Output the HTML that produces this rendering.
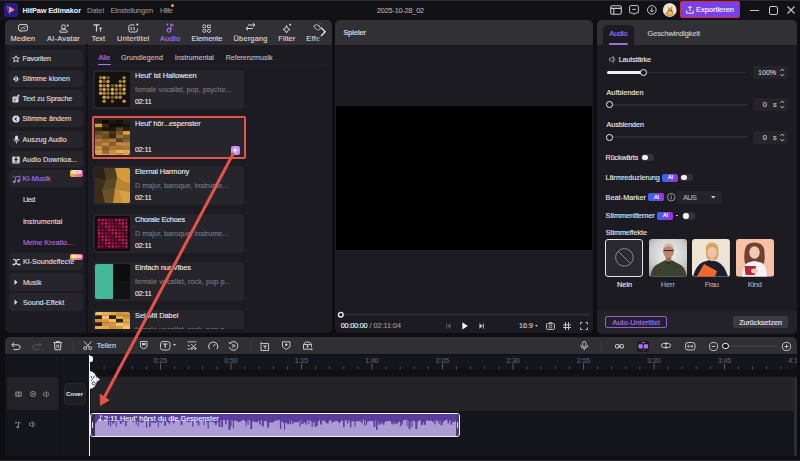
<!DOCTYPE html>
<html><head><meta charset="utf-8">
<style>
*{margin:0;padding:0;box-sizing:border-box}
html,body{width:800px;height:461px;overflow:hidden;background:#0e0d12;font-family:"Liberation Sans",sans-serif;color:#e6e6ea}
.a{position:absolute}
.t{position:absolute;white-space:nowrap;line-height:1;-webkit-text-stroke:0.15px currentColor}
.t.b{-webkit-text-stroke:0}
svg{position:absolute;overflow:visible}
</style></head><body>
<div class="a" style="left:0px;top:0px;width:800px;height:20px;background:#121116;"></div>
<div class="a" style="left:0px;top:0px;width:800px;height:1px;background:#2a292f;"></div>
<div class="a" style="left:4.3px;top:3px;width:13.5px;height:13.7px;background:#2a1b7e;border-radius:3px"></div>
<svg style="left:4px;top:3px" width="14" height="14" viewBox="0 0 14 14"><defs><linearGradient id="lg1" x1="0" y1="0" x2="1" y2="0"><stop offset="0" stop-color="#ffb070"/><stop offset="1" stop-color="#d040e0"/></linearGradient></defs>
<path d="M5.2 3.6 L11.2 6.8 L5.2 10 Z" fill="url(#lg1)"/>
<circle cx="3.9" cy="3.9" r="0.8" fill="#9a7af0"/><circle cx="3.9" cy="6.3" r="0.8" fill="#8a6ae0"/><circle cx="4.4" cy="8.7" r="0.8" fill="#7a5ad0"/><circle cx="5.4" cy="10.8" r="0.7" fill="#6a4ac0"/></svg>
<div class="t b" style="left:22.50px;top:6.63px;font-size:7.4px;letter-spacing:-0.130px;color:#f4f4f6;font-weight:bold;">HitPaw Edimakor</div>
<div class="t" style="left:87.00px;top:6.63px;font-size:7.4px;letter-spacing:-0.055px;color:#8e8d93;">Datei</div>
<div class="t" style="left:110.60px;top:6.63px;font-size:7.4px;letter-spacing:-0.156px;color:#8e8d93;">Einstellungen</div>
<div class="t" style="left:160.00px;top:6.63px;font-size:7.4px;letter-spacing:-0.461px;color:#8e8d93;">Hilfe</div>
<div class="a" style="left:170.6px;top:3.9px;width:3.3px;height:3.3px;background:#f0a030;border-radius:50%"></div>
<div class="t" style="left:377.00px;top:7.03px;font-size:7.2px;letter-spacing:-0.141px;color:#a9a8ae;">2025-10-28_02</div>
<svg style="left:610px;top:5px" width="12" height="10" viewBox="0 0 12 10"><rect x="0.7" y="0.7" width="10.6" height="8.6" rx="1.8" fill="none" stroke="#c9c9cd" stroke-width="1.1"/><path d="M0.7 3.4H11.3M3.8 3.4V9.3" stroke="#c9c9cd" stroke-width="1.1"/></svg>
<svg style="left:629px;top:5px" width="10" height="11" viewBox="0 0 10 11"><path d="M1.5 0.6H8.5A1 1 0 0 1 9.4 1.6V7A1 1 0 0 1 8.5 8H6.2L5 9.6L3.8 8H1.5A1 1 0 0 1 0.6 7V1.6A1 1 0 0 1 1.5 0.6Z" fill="none" stroke="#c9c9cd" stroke-width="1"/><path d="M3.3 4.4H6.7" stroke="#c9c9cd" stroke-width="1"/></svg>
<svg style="left:647px;top:5px" width="10" height="10" viewBox="0 0 10 10"><circle cx="4.8" cy="4.9" r="4.3" fill="none" stroke="#c9c9cd" stroke-width="1"/><path d="M4.8 2.6V7M3.1 5.3L4.8 7L6.5 5.3" fill="none" stroke="#c9c9cd" stroke-width="1"/></svg>
<svg style="left:663px;top:3px" width="14" height="14" viewBox="0 0 14 14"><defs><clipPath id="avc"><circle cx="6.7" cy="7" r="6.7"/></clipPath></defs><g clip-path="url(#avc)"><rect width="14" height="14" fill="#eee2cc"/><path d="M3 13Q3.5 8 5.5 6.5L4.5 3.5L7 5.2L9.5 3L9 6.5Q11 8.5 11 13Z" fill="#c8944e"/><path d="M5 9Q7 7.5 9 9.5L8 12H5.5Z" fill="#e6b870"/><circle cx="6" cy="7.6" r="0.6" fill="#4a3020"/><circle cx="8.4" cy="7.6" r="0.6" fill="#4a3020"/><path d="M1 12L4 9" stroke="#a87040" stroke-width="0.8"/></g><circle cx="6.7" cy="7" r="6.5" fill="none" stroke="#f4ece0" stroke-width="0.5"/></svg>
<div class="a" style="left:679.5px;top:1.2px;width:60.5px;height:17px;background:#7a40e8;border:1px solid #d8283c;border-radius:2px"></div>
<svg style="left:686px;top:4.5px" width="8" height="9" viewBox="0 0 8 9"><path d="M4 6V1.2M2.1 3L4 1.1L5.9 3M0.7 5.5V8.2H7.3V5.5" fill="none" stroke="#f2ecff" stroke-width="1"/></svg>
<div class="t" style="left:696.00px;top:6.38px;font-size:7.5px;letter-spacing:-0.032px;color:#f7f3ff;">Exportieren</div>
<div class="a" style="left:750px;top:9.5px;width:9px;height:1.2px;background:#c9c9cd;"></div>
<div class="a" style="left:769px;top:6px;width:8.5px;height:8.5px;background:transparent;border:1.1px solid #c9c9cd;border-radius:2px"></div>
<svg style="left:787px;top:6px" width="8" height="8" viewBox="0 0 8 8"><path d="M0.5 0.5L7.5 7.5M7.5 0.5L0.5 7.5" stroke="#c9c9cd" stroke-width="1.1"/></svg>
<div class="a" style="left:5px;top:20px;width:327px;height:313px;background:#1c1b21;border-radius:5px;overflow:hidden"></div>
<div class="a" style="left:5px;top:20px;width:327px;height:24.6px;background:#313135;border-radius:5px 5px 0 0"></div>
<div class="a" style="left:86.3px;top:44px;width:1.4px;height:289px;background:#131217;"></div>
<svg style="left:17.5px;top:24px" width="10" height="8" viewBox="0 0 10 8"><path d="M2 0.6H8A1.4 1.4 0 0 1 9.4 2V5.4A1.4 1.4 0 0 1 8 6.8H4.5L3 7.6V6.8H2A1.4 1.4 0 0 1 0.6 5.4V2A1.4 1.4 0 0 1 2 0.6Z" fill="none" stroke="#d6d6da" stroke-width="1"/><path d="M2.5 5.5L5 3.3L7 5" fill="none" stroke="#d6d6da" stroke-width="0.9"/><circle cx="7.2" cy="2.6" r="0.7" fill="#d6d6da"/></svg>
<div class="t" style="left:10.50px;top:35.13px;font-size:7.4px;letter-spacing:0.072px;color:#d6d6da;">Medien</div>
<svg style="left:58.5px;top:23.5px" width="11" height="9" viewBox="0 0 11 9"><circle cx="4.5" cy="2.8" r="2" fill="none" stroke="#d6d6da" stroke-width="1"/><path d="M1 8.2V7.4C1 6.3 2 5.6 3.2 5.6H6C7.2 5.6 8.2 6.3 8.2 7.4V8.2Z" fill="none" stroke="#d6d6da" stroke-width="1"/><circle cx="8.8" cy="1.4" r="1" fill="#d6d6da"/></svg>
<div class="t" style="left:47.00px;top:35.13px;font-size:7.4px;letter-spacing:0.255px;color:#d6d6da;">AI-Avatar</div>
<svg style="left:92.5px;top:24px" width="10" height="8" viewBox="0 0 10 8"><path d="M0.5 0.8H6.5M3.5 0.8V7.6" stroke="#d6d6da" stroke-width="1.2"/><path d="M6 4.2H9.2M7.6 4.2V7.6" stroke="#d6d6da" stroke-width="1"/></svg>
<div class="t" style="left:91.50px;top:35.13px;font-size:7.4px;letter-spacing:-0.018px;color:#d6d6da;">Text</div>
<svg style="left:127.5px;top:22.5px" width="11" height="10" viewBox="0 0 11 10"><path d="M6.5 2H2.4A1.6 1.6 0 0 0 0.8 3.6V7.4A1.6 1.6 0 0 0 2.4 9H7.8A1.6 1.6 0 0 0 9.4 7.4V5.5" fill="none" stroke="#d6d6da" stroke-width="1"/><path d="M4.2 4.6H3V6.6H4.2M7 4.6H5.8V6.6H7" fill="none" stroke="#d6d6da" stroke-width="0.8"/><circle cx="9.3" cy="1.5" r="1.1" fill="#d6d6da"/></svg>
<div class="t" style="left:117.00px;top:35.13px;font-size:7.4px;letter-spacing:0.289px;color:#d6d6da;">Untertitel</div>
<svg style="left:165.5px;top:23px" width="9" height="10" viewBox="0 0 9 10"><circle cx="3" cy="7.3" r="1.9" fill="none" stroke="#b06ef0" stroke-width="1.1"/><path d="M4.9 7.3V1Q6.5 1.5 7.8 3" fill="none" stroke="#b06ef0" stroke-width="1.1"/><circle cx="1.3" cy="1.5" r="0.9" fill="#b06ef0"/></svg>
<div class="t" style="left:160.00px;top:35.13px;font-size:7.4px;letter-spacing:0.295px;color:#b06ef0;">Audio</div>
<svg style="left:201.5px;top:23.5px" width="10" height="9" viewBox="0 0 10 9"><circle cx="2.3" cy="2.3" r="1.6" fill="none" stroke="#d6d6da" stroke-width="0.9"/><circle cx="2.3" cy="6.8" r="1.6" fill="none" stroke="#d6d6da" stroke-width="0.9"/><circle cx="7" cy="6.8" r="1.6" fill="none" stroke="#d6d6da" stroke-width="0.9"/><rect x="5.6" y="1" width="2.6" height="2.6" fill="none" stroke="#d6d6da" stroke-width="0.8"/></svg>
<div class="t" style="left:191.60px;top:35.13px;font-size:7.4px;letter-spacing:-0.058px;color:#d6d6da;">Elemente</div>
<svg style="left:245px;top:23px" width="11" height="9" viewBox="0 0 11 9"><path d="M3 2H10M8 0.2L10 2L8 3.8" fill="none" stroke="#d6d6da" stroke-width="1"/><path d="M1 5.5H8M3 3.7L1 5.5L3 7.3" fill="none" stroke="#d6d6da" stroke-width="1"/></svg>
<div class="t" style="left:233.60px;top:35.13px;font-size:7.4px;letter-spacing:0.188px;color:#d6d6da;">Übergang</div>
<svg style="left:282px;top:22.5px" width="10" height="10" viewBox="0 0 10 10"><path d="M4.5 2.5Q5 6 8 6.5Q5 7 4.5 10Q4 7 1 6.5Q4 6 4.5 2.5Z" fill="none" stroke="#d6d6da" stroke-width="1" stroke-linejoin="round"/><circle cx="8.2" cy="1.8" r="1" fill="#d6d6da"/></svg>
<div class="t" style="left:278.30px;top:35.13px;font-size:7.4px;letter-spacing:0.109px;color:#d6d6da;">Filter</div>
<svg style="left:313px;top:22px" width="12" height="11" viewBox="0 0 12 11"><path d="M1 5C0.5 3.5 2 2.5 3.5 3L6 3.5L7.5 6.5L5 8.5Z" fill="none" stroke="#d6d6da" stroke-width="1" opacity="0.85"/><path d="M6 0.5V1.5M8.5 1L8 2" stroke="#d6d6da" stroke-width="0.6" opacity="0.5"/></svg>
<div class="t" style="left:306.30px;top:35.13px;font-size:7.4px;letter-spacing:0.243px;color:#d6d6da;">Effe</div>
<div class="a" style="left:315px;top:30px;width:9px;height:13px;background:linear-gradient(90deg,rgba(49,49,53,0),#313135);"></div>
<svg style="left:319.5px;top:27.3px" width="7" height="10" viewBox="0 0 7 10"><path d="M1 0.6L5.2 4.8L1 9" fill="none" stroke="#f0f0f2" stroke-width="1.3"/></svg>
<div class="a" style="left:9px;top:50px;width:73.5px;height:17.3px;background:#26252b;border-radius:4px"></div>
<div class="t" style="left:22.50px;top:55.23px;font-size:7.2px;letter-spacing:-0.168px;color:#dcdce0;">Favoriten</div>
<div class="a" style="left:9px;top:70px;width:73.5px;height:17.3px;background:#26252b;border-radius:4px"></div>
<div class="t" style="left:22.50px;top:75.23px;font-size:7.2px;letter-spacing:-0.009px;color:#dcdce0;">Stimme klonen</div>
<div class="a" style="left:9px;top:90px;width:73.5px;height:17.3px;background:#26252b;border-radius:4px"></div>
<div class="t" style="left:22.50px;top:95.23px;font-size:7.2px;letter-spacing:-0.122px;color:#dcdce0;">Text zu Sprache</div>
<div class="a" style="left:9px;top:110px;width:73.5px;height:17.3px;background:#26252b;border-radius:4px"></div>
<div class="t" style="left:22.50px;top:115.23px;font-size:7.2px;letter-spacing:0.006px;color:#dcdce0;">Stimme ändern</div>
<div class="a" style="left:9px;top:130.5px;width:73.5px;height:17.3px;background:#26252b;border-radius:4px"></div>
<div class="t" style="left:22.50px;top:135.73px;font-size:7.2px;letter-spacing:0.022px;color:#dcdce0;">Auszug Audio</div>
<div class="a" style="left:9px;top:150.5px;width:73.5px;height:17.3px;background:#26252b;border-radius:4px"></div>
<div class="t" style="left:22.50px;top:155.73px;font-size:7.2px;letter-spacing:0.023px;color:#dcdce0;">Audio Downloa...</div>
<div class="a" style="left:9px;top:170.2px;width:73.5px;height:17.3px;background:#26252b;border-radius:4px"></div>
<div class="t" style="left:22.50px;top:175.43px;font-size:7.2px;letter-spacing:0.025px;color:#b06ef0;">KI-Musik</div>
<svg style="left:12px;top:54.5px" width="8" height="8" viewBox="0 0 8 8"><path d="M4 0.8L5 3H7.3L5.5 4.5L6.2 7L4 5.6L1.8 7L2.5 4.5L0.7 3H3Z" fill="none" stroke="#dcdce0" stroke-width="0.9" stroke-linejoin="round"/></svg>
<svg style="left:12px;top:74.5px" width="8" height="8" viewBox="0 0 8 8"><path d="M1 4H2M2.5 2.5V5.5M4 0.8V7.2M5.5 2V6M7 3.5V4.5" stroke="#dcdce0" stroke-width="1"/></svg>
<svg style="left:12px;top:94px" width="8" height="9" viewBox="0 0 8 9"><rect x="0.5" y="2.5" width="6" height="6" rx="1" fill="#dcdce0"/><path d="M1.8 5H4.5M1.8 6.8H3.5" stroke="#26252b" stroke-width="0.8"/><path d="M6.5 0.5V3M5.2 1.7H7.8" stroke="#dcdce0" stroke-width="0.8"/></svg>
<svg style="left:12px;top:114.5px" width="8" height="8" viewBox="0 0 8 8"><circle cx="4" cy="4" r="3.6" fill="#dcdce0"/><path d="M4.7 2.3L3 4L4.7 5.7" fill="none" stroke="#26252b" stroke-width="1.1"/></svg>
<svg style="left:13px;top:134.5px" width="7" height="9" viewBox="0 0 7 9"><rect x="2" y="0.5" width="3" height="5" rx="1.5" fill="#dcdce0"/><path d="M0.8 3.8Q0.8 6.6 3.5 6.6Q6.2 6.6 6.2 3.8M3.5 6.6V8.5" fill="none" stroke="#dcdce0" stroke-width="0.8"/></svg>
<svg style="left:12px;top:154.5px" width="8" height="9" viewBox="0 0 8 9"><rect x="0.3" y="1.6" width="7.4" height="7" rx="1.2" fill="#dcdce0"/><path d="M4 0.3V5.4M2.3 3.8L4 5.5L5.7 3.8" fill="none" stroke="#26252b" stroke-width="1.1"/><path d="M1.8 7H6.2" stroke="#26252b" stroke-width="0.7"/></svg>
<svg style="left:11.5px;top:174.5px" width="9" height="9" viewBox="0 0 9 9"><circle cx="2.2" cy="6.8" r="1.4" fill="#b06ef0"/><circle cx="6.6" cy="6" r="1.4" fill="#b06ef0"/><path d="M3.4 6.8V2L7.8 1.2V6" fill="none" stroke="#b06ef0" stroke-width="0.9"/><path d="M0.8 1.5H2.2M1.5 0.8V2.2" stroke="#b06ef0" stroke-width="0.7"/></svg>
<div class="a" style="left:70px;top:170.2px;width:12.9px;height:6.5px;background:linear-gradient(90deg,#f7b733,#e84fc0);border-radius:2px"></div>
<div class="t b" style="left:71.60px;top:171.28px;font-size:4.6px;letter-spacing:-0.411px;color:#fff;font-weight:bold;">NEW</div>
<div class="t" style="left:22.90px;top:196.23px;font-size:7.2px;letter-spacing:-0.378px;color:#dcdce0;">Lied</div>
<div class="t" style="left:22.90px;top:217.73px;font-size:7.2px;letter-spacing:-0.018px;color:#dcdce0;">Instrumental</div>
<div class="t" style="left:22.90px;top:239.03px;font-size:7.2px;letter-spacing:-0.020px;color:#a86ae8;">Meine Kreatio...</div>
<div class="a" style="left:9px;top:252.7px;width:73.5px;height:17.3px;background:#26252b;border-radius:4px"></div>
<div class="t" style="left:22.90px;top:258.13px;font-size:7.2px;letter-spacing:-0.013px;color:#dcdce0;">KI-Soundeffecte</div>
<div class="a" style="left:9px;top:273.3px;width:73.5px;height:17.3px;background:#26252b;border-radius:4px"></div>
<div class="t" style="left:22.90px;top:278.73px;font-size:7.2px;letter-spacing:-0.040px;color:#dcdce0;">Musik</div>
<div class="a" style="left:9px;top:293.3px;width:73.5px;height:17.3px;background:#26252b;border-radius:4px"></div>
<div class="t" style="left:22.90px;top:298.73px;font-size:7.2px;letter-spacing:-0.016px;color:#dcdce0;">Sound-Effekt</div>
<svg style="left:11.5px;top:257.5px" width="9" height="8" viewBox="0 0 9 8"><path d="M1 1.5H3L5.5 6.5H7.8M1 6.5H3L5.5 1.5H7.8" fill="none" stroke="#dcdce0" stroke-width="1.1"/><circle cx="1.6" cy="6.5" r="1.1" fill="#dcdce0"/><circle cx="7.4" cy="6.5" r="1.1" fill="#dcdce0"/></svg>
<div class="a" style="left:70px;top:254px;width:13.3px;height:5.6px;background:linear-gradient(90deg,#f7b733,#e84fc0);border-radius:2px"></div>
<div class="t b" style="left:71.80px;top:254.78px;font-size:4.4px;letter-spacing:-0.255px;color:#fff;font-weight:bold;">NEW</div>
<svg style="left:13.5px;top:278.5px" width="4" height="7" viewBox="0 0 4 7"><path d="M0.5 0.5L3.5 3.3L0.5 6.1Z" fill="#dcdce0"/></svg>
<svg style="left:13.5px;top:298.5px" width="4" height="7" viewBox="0 0 4 7"><path d="M0.5 0.5L3.5 3.3L0.5 6.1Z" fill="#dcdce0"/></svg>
<div class="t" style="left:98.60px;top:53.73px;font-size:7.2px;letter-spacing:-0.077px;color:#b06ef0;">Alle</div>
<div class="t" style="left:121.00px;top:53.73px;font-size:7.2px;letter-spacing:0.034px;color:#b9b8be;">Grundlegend</div>
<div class="t" style="left:174.70px;top:53.73px;font-size:7.2px;letter-spacing:-0.026px;color:#b9b8be;">Instrumental</div>
<div class="t" style="left:225.75px;top:53.73px;font-size:7.2px;letter-spacing:-0.101px;color:#b9b8be;">Referenzmusik</div>
<div class="a" style="left:90px;top:64.5px;width:236px;height:0.7px;background:#25242a;"></div>
<div class="a" style="left:98px;top:63.6px;width:12.5px;height:1.5px;background:#b06ef0;border-radius:1px"></div>
<div class="a" style="left:88px;top:66px;width:243px;height:263px;overflow:hidden">
<div class="a" style="left:4.5px;top:4px;width:151.5px;height:39px;background:#26252b;border-radius:4px"></div>
<div class="a" style="left:7.200000000000003px;top:5.6px;width:35px;height:35.5px;border-radius:2px;overflow:hidden"><svg style="left:0;top:0" width="35" height="35.5" viewBox="0 0 35 35.5"><rect width="35" height="35.5" fill="#15120e"/><circle cx="5.6" cy="5.7" r="1.75" fill="#9a7436"/><circle cx="5.6" cy="9.6" r="1.75" fill="#d8a550"/><circle cx="5.6" cy="13.8" r="1.75" fill="#d8a550"/><circle cx="5.6" cy="17.4" r="1.75" fill="#9a7436"/><circle cx="5.6" cy="21.3" r="1.75" fill="#c89848"/><circle cx="9.1" cy="5.7" r="1.75" fill="#d8a550"/><circle cx="9.1" cy="9.6" r="1.75" fill="#7a5a2c"/><circle cx="9.1" cy="13.8" r="1.75" fill="#a88038"/><circle cx="9.1" cy="17.4" r="1.75" fill="#d8a550"/><circle cx="9.1" cy="21.3" r="1.75" fill="#b88a40"/><circle cx="9.1" cy="25.3" r="1.75" fill="#d8a550"/><circle cx="9.1" cy="29.2" r="1.75" fill="#b88a40"/><circle cx="13" cy="5.7" r="1.75" fill="#7a5a2c"/><circle cx="13" cy="9.6" r="1.75" fill="#c89848"/><circle cx="13" cy="13.8" r="1.75" fill="#d8a550"/><circle cx="13" cy="17.4" r="1.75" fill="#9a7436"/><circle cx="13" cy="21.3" r="1.75" fill="#9a7436"/><circle cx="13" cy="25.3" r="1.75" fill="#a88038"/><circle cx="17.4" cy="13.8" r="1.75" fill="#7a5a2c"/><circle cx="17.4" cy="17.4" r="1.75" fill="#d8a550"/><circle cx="17.4" cy="21.3" r="1.75" fill="#d8a550"/><circle cx="17.4" cy="25.3" r="1.75" fill="#7a5a2c"/><circle cx="17.4" cy="29.2" r="1.75" fill="#7a5a2c"/><circle cx="21.3" cy="13.8" r="1.75" fill="#a88038"/><circle cx="21.3" cy="17.4" r="1.75" fill="#9a7436"/><circle cx="21.3" cy="21.3" r="1.75" fill="#9a7436"/><circle cx="21.3" cy="25.3" r="1.75" fill="#a88038"/><circle cx="25.2" cy="9.6" r="1.75" fill="#9a7436"/><circle cx="25.2" cy="13.8" r="1.75" fill="#d8a550"/><circle cx="25.2" cy="17.4" r="1.75" fill="#7a5a2c"/><circle cx="25.2" cy="21.3" r="1.75" fill="#a88038"/><circle cx="25.2" cy="25.3" r="1.75" fill="#b88a40"/><circle cx="29.1" cy="5.7" r="1.75" fill="#a88038"/><circle cx="29.1" cy="9.6" r="1.75" fill="#b88a40"/><circle cx="29.1" cy="13.8" r="1.75" fill="#9a7436"/><circle cx="29.1" cy="17.4" r="1.75" fill="#d8a550"/><circle cx="29.1" cy="21.3" r="1.75" fill="#b88a40"/><circle cx="29.1" cy="29.2" r="1.75" fill="#c89848"/></svg></div>
<div class="t" style="left:47.00px;top:6.03px;font-size:7.4px;letter-spacing:-0.074px;color:#e4e4e8;">Heut' ist Halloween</div>
<div class="t" style="left:47.00px;top:19.83px;font-size:7.2px;letter-spacing:0.005px;color:#77767c;">female vocalist, pop, psyche...</div>
<div class="t" style="left:47.00px;top:31.93px;font-size:7.2px;letter-spacing:-0.196px;color:#e4e4e8;">02:11</div>
<div class="a" style="left:4.5px;top:52px;width:151.5px;height:39px;background:#26252b;border-radius:4px"></div>
<div class="a" style="left:7.200000000000003px;top:53.6px;width:35px;height:35.5px;border-radius:2px;overflow:hidden"><svg style="left:0;top:0" width="35" height="37" viewBox="0 0 35 37"><rect x="0" y="0.00" width="7.05" height="3.75" fill="#2a1e10"/><rect x="7" y="0.00" width="7.05" height="3.75" fill="#0c0906"/><rect x="14" y="0.00" width="7.05" height="3.75" fill="#1e1a12"/><rect x="21" y="0.00" width="7.05" height="3.75" fill="#141008"/><rect x="28" y="0.00" width="7.05" height="3.75" fill="#2a2010"/><rect x="0" y="3.70" width="7.05" height="3.75" fill="#d89838"/><rect x="7" y="3.70" width="7.05" height="3.75" fill="#3a2a18"/><rect x="14" y="3.70" width="7.05" height="3.75" fill="#0c0906"/><rect x="21" y="3.70" width="7.05" height="3.75" fill="#141008"/><rect x="28" y="3.70" width="7.05" height="3.75" fill="#1a140a"/><rect x="0" y="7.40" width="7.05" height="3.75" fill="#3a2a14"/><rect x="7" y="7.40" width="7.05" height="3.75" fill="#201608"/><rect x="14" y="7.40" width="7.05" height="3.75" fill="#1e1810"/><rect x="21" y="7.40" width="7.05" height="3.75" fill="#5a4020"/><rect x="28" y="7.40" width="7.05" height="3.75" fill="#2a2010"/><rect x="0" y="11.10" width="7.05" height="3.75" fill="#6a4a20"/><rect x="7" y="11.10" width="7.05" height="3.75" fill="#7a5a28"/><rect x="14" y="11.10" width="7.05" height="3.75" fill="#4a3418"/><rect x="21" y="11.10" width="7.05" height="3.75" fill="#7a5828"/><rect x="28" y="11.10" width="7.05" height="3.75" fill="#e0a040"/><rect x="0" y="14.80" width="7.05" height="3.75" fill="#8a6028"/><rect x="7" y="14.80" width="7.05" height="3.75" fill="#6a4a20"/><rect x="14" y="14.80" width="7.05" height="3.75" fill="#3a2a14"/><rect x="21" y="14.80" width="7.05" height="3.75" fill="#a07030"/><rect x="28" y="14.80" width="7.05" height="3.75" fill="#7a5828"/><rect x="0" y="18.50" width="7.05" height="3.75" fill="#b07838"/><rect x="7" y="18.50" width="7.05" height="3.75" fill="#9a6a30"/><rect x="14" y="18.50" width="7.05" height="3.75" fill="#b07838"/><rect x="21" y="18.50" width="7.05" height="3.75" fill="#5a4020"/><rect x="28" y="18.50" width="7.05" height="3.75" fill="#8a6030"/><rect x="0" y="22.20" width="7.05" height="3.75" fill="#a07030"/><rect x="7" y="22.20" width="7.05" height="3.75" fill="#c08840"/><rect x="14" y="22.20" width="7.05" height="3.75" fill="#8a6030"/><rect x="21" y="22.20" width="7.05" height="3.75" fill="#c08840"/><rect x="28" y="22.20" width="7.05" height="3.75" fill="#c08840"/><rect x="0" y="25.90" width="7.05" height="3.75" fill="#d09040"/><rect x="7" y="25.90" width="7.05" height="3.75" fill="#8a6030"/><rect x="14" y="25.90" width="7.05" height="3.75" fill="#b07838"/><rect x="21" y="25.90" width="7.05" height="3.75" fill="#a07030"/><rect x="28" y="25.90" width="7.05" height="3.75" fill="#b07838"/><rect x="0" y="29.60" width="7.05" height="3.75" fill="#e0a040"/><rect x="7" y="29.60" width="7.05" height="3.75" fill="#9a6a30"/><rect x="14" y="29.60" width="7.05" height="3.75" fill="#d09040"/><rect x="21" y="29.60" width="7.05" height="3.75" fill="#f0b050"/><rect x="28" y="29.60" width="7.05" height="3.75" fill="#e0a848"/><rect x="0" y="33.30" width="7.05" height="3.75" fill="#f0b050"/><rect x="7" y="33.30" width="7.05" height="3.75" fill="#d09040"/><rect x="14" y="33.30" width="7.05" height="3.75" fill="#e0a848"/><rect x="21" y="33.30" width="7.05" height="3.75" fill="#d09040"/><rect x="28" y="33.30" width="7.05" height="3.75" fill="#f0b050"/></svg></div>
<div class="t" style="left:47.00px;top:54.03px;font-size:7.4px;letter-spacing:-0.117px;color:#e4e4e8;">Heut' hör...espenster</div>
<div class="t" style="left:47.00px;top:79.93px;font-size:7.2px;letter-spacing:-0.196px;color:#e4e4e8;">02:11</div>
<div class="a" style="left:4.5px;top:100px;width:151.5px;height:39px;background:#26252b;border-radius:4px"></div>
<div class="a" style="left:7.200000000000003px;top:101.6px;width:35px;height:35.5px;border-radius:2px;overflow:hidden"><svg style="left:0;top:0" width="35" height="35.5" viewBox="0 0 35 35.5"><rect width="35" height="35.5" fill="#4a3a1c"/>
<path d="M0 0H9L11 12L0 10Z" fill="#2a2214"/><path d="M9 0H20L22 9L11 12Z" fill="#4e3e1e"/><path d="M20 0H35V16L28 14L22 9Z" fill="#d49a3c"/>
<path d="M0 10L11 12L7 22L0 20Z" fill="#3e3018"/><path d="M11 12L22 9L20 20L7 22Z" fill="#5a4822"/><path d="M22 9L28 14L35 16V24L20 20Z" fill="#b8862e"/>
<path d="M0 20L7 22L10 35.5H0Z" fill="#3a2c16"/><path d="M7 22L20 20L18 35.5H10Z" fill="#6a5426"/><path d="M20 20L35 24V35.5H18Z" fill="#c8903a"/><path d="M24 22L35 24V35.5H28Z" fill="#d8a040"/></svg></div>
<div class="t" style="left:47.00px;top:102.03px;font-size:7.4px;letter-spacing:-0.095px;color:#e4e4e8;">Eternal Harmony</div>
<div class="t" style="left:47.00px;top:115.83px;font-size:7.2px;letter-spacing:0.023px;color:#77767c;">D major, baroque, instrume...</div>
<div class="t" style="left:47.00px;top:127.93px;font-size:7.2px;letter-spacing:-0.196px;color:#e4e4e8;">02:11</div>
<div class="a" style="left:4.5px;top:148px;width:151.5px;height:39px;background:#26252b;border-radius:4px"></div>
<div class="a" style="left:7.200000000000003px;top:149.6px;width:35px;height:35.5px;border-radius:2px;overflow:hidden"><svg style="left:0;top:0" width="35" height="35.5" viewBox="0 0 35 35.5"><rect width="35" height="35.5" fill="#160810"/><rect x="2" y="2" width="31" height="31" fill="#3a0a1e"/><rect x="3.0" y="3.0" width="2.2" height="2.2" fill="#c01850"/><rect x="6.4" y="3.0" width="2.2" height="2.2" fill="#d02060"/><rect x="9.8" y="3.0" width="2.2" height="2.2" fill="#a81448"/><rect x="13.2" y="3.0" width="2.2" height="2.2" fill="#901040"/><rect x="16.6" y="3.0" width="2.2" height="2.2" fill="#70102e"/><rect x="20.0" y="3.0" width="2.2" height="2.2" fill="#c01850"/><rect x="23.4" y="3.0" width="2.2" height="2.2" fill="#d02060"/><rect x="26.8" y="3.0" width="2.2" height="2.2" fill="#a81448"/><rect x="30.2" y="3.0" width="2.2" height="2.2" fill="#901040"/><rect x="3.0" y="6.3" width="2.2" height="2.2" fill="#70102e"/><rect x="6.4" y="6.3" width="2.2" height="2.2" fill="#c01850"/><rect x="9.8" y="6.3" width="2.2" height="2.2" fill="#d02060"/><rect x="13.2" y="6.3" width="2.2" height="2.2" fill="#a81448"/><rect x="16.6" y="6.3" width="2.2" height="2.2" fill="#901040"/><rect x="20.0" y="6.3" width="2.2" height="2.2" fill="#70102e"/><rect x="23.4" y="6.3" width="2.2" height="2.2" fill="#c01850"/><rect x="26.8" y="6.3" width="2.2" height="2.2" fill="#d02060"/><rect x="30.2" y="6.3" width="2.2" height="2.2" fill="#a81448"/><rect x="3.0" y="9.6" width="2.2" height="2.2" fill="#901040"/><rect x="6.4" y="9.6" width="2.2" height="2.2" fill="#70102e"/><rect x="9.8" y="9.6" width="2.2" height="2.2" fill="#c01850"/><rect x="13.2" y="9.6" width="2.2" height="2.2" fill="#d02060"/><rect x="16.6" y="9.6" width="2.2" height="2.2" fill="#a81448"/><rect x="20.0" y="9.6" width="2.2" height="2.2" fill="#901040"/><rect x="23.4" y="9.6" width="2.2" height="2.2" fill="#70102e"/><rect x="26.8" y="9.6" width="2.2" height="2.2" fill="#c01850"/><rect x="30.2" y="9.6" width="2.2" height="2.2" fill="#d02060"/><rect x="3.0" y="12.9" width="2.2" height="2.2" fill="#a81448"/><rect x="6.4" y="12.9" width="2.2" height="2.2" fill="#901040"/><rect x="9.8" y="12.9" width="2.2" height="2.2" fill="#70102e"/><rect x="13.2" y="12.9" width="2.2" height="2.2" fill="#c01850"/><rect x="16.6" y="12.9" width="2.2" height="2.2" fill="#d02060"/><rect x="20.0" y="12.9" width="2.2" height="2.2" fill="#a81448"/><rect x="23.4" y="12.9" width="2.2" height="2.2" fill="#901040"/><rect x="26.8" y="12.9" width="2.2" height="2.2" fill="#70102e"/><rect x="30.2" y="12.9" width="2.2" height="2.2" fill="#c01850"/><rect x="3.0" y="16.2" width="2.2" height="2.2" fill="#d02060"/><rect x="6.4" y="16.2" width="2.2" height="2.2" fill="#a81448"/><rect x="9.8" y="16.2" width="2.2" height="2.2" fill="#901040"/><rect x="13.2" y="16.2" width="2.2" height="2.2" fill="#70102e"/><rect x="16.6" y="16.2" width="2.2" height="2.2" fill="#c01850"/><rect x="20.0" y="16.2" width="2.2" height="2.2" fill="#d02060"/><rect x="23.4" y="16.2" width="2.2" height="2.2" fill="#a81448"/><rect x="26.8" y="16.2" width="2.2" height="2.2" fill="#901040"/><rect x="30.2" y="16.2" width="2.2" height="2.2" fill="#70102e"/><rect x="3.0" y="19.5" width="2.2" height="2.2" fill="#c01850"/><rect x="6.4" y="19.5" width="2.2" height="2.2" fill="#d02060"/><rect x="9.8" y="19.5" width="2.2" height="2.2" fill="#a81448"/><rect x="13.2" y="19.5" width="2.2" height="2.2" fill="#901040"/><rect x="16.6" y="19.5" width="2.2" height="2.2" fill="#70102e"/><rect x="20.0" y="19.5" width="2.2" height="2.2" fill="#c01850"/><rect x="23.4" y="19.5" width="2.2" height="2.2" fill="#d02060"/><rect x="26.8" y="19.5" width="2.2" height="2.2" fill="#a81448"/><rect x="30.2" y="19.5" width="2.2" height="2.2" fill="#901040"/><rect x="3.0" y="22.8" width="2.2" height="2.2" fill="#70102e"/><rect x="6.4" y="22.8" width="2.2" height="2.2" fill="#c01850"/><rect x="9.8" y="22.8" width="2.2" height="2.2" fill="#d02060"/><rect x="13.2" y="22.8" width="2.2" height="2.2" fill="#a81448"/><rect x="16.6" y="22.8" width="2.2" height="2.2" fill="#901040"/><rect x="20.0" y="22.8" width="2.2" height="2.2" fill="#70102e"/><rect x="23.4" y="22.8" width="2.2" height="2.2" fill="#c01850"/><rect x="26.8" y="22.8" width="2.2" height="2.2" fill="#d02060"/><rect x="30.2" y="22.8" width="2.2" height="2.2" fill="#a81448"/><rect x="3.0" y="26.1" width="2.2" height="2.2" fill="#901040"/><rect x="6.4" y="26.1" width="2.2" height="2.2" fill="#70102e"/><rect x="9.8" y="26.1" width="2.2" height="2.2" fill="#c01850"/><rect x="13.2" y="26.1" width="2.2" height="2.2" fill="#d02060"/><rect x="16.6" y="26.1" width="2.2" height="2.2" fill="#a81448"/><rect x="20.0" y="26.1" width="2.2" height="2.2" fill="#901040"/><rect x="23.4" y="26.1" width="2.2" height="2.2" fill="#70102e"/><rect x="26.8" y="26.1" width="2.2" height="2.2" fill="#c01850"/><rect x="30.2" y="26.1" width="2.2" height="2.2" fill="#d02060"/><rect x="3.0" y="29.4" width="2.2" height="2.2" fill="#a81448"/><rect x="6.4" y="29.4" width="2.2" height="2.2" fill="#901040"/><rect x="9.8" y="29.4" width="2.2" height="2.2" fill="#70102e"/><rect x="13.2" y="29.4" width="2.2" height="2.2" fill="#c01850"/><rect x="16.6" y="29.4" width="2.2" height="2.2" fill="#d02060"/><rect x="20.0" y="29.4" width="2.2" height="2.2" fill="#a81448"/><rect x="23.4" y="29.4" width="2.2" height="2.2" fill="#901040"/><rect x="26.8" y="29.4" width="2.2" height="2.2" fill="#70102e"/><rect x="30.2" y="29.4" width="2.2" height="2.2" fill="#c01850"/></svg></div>
<div class="t" style="left:47.00px;top:150.03px;font-size:7.4px;letter-spacing:-0.182px;color:#e4e4e8;">Chorale Echoes</div>
<div class="t" style="left:47.00px;top:163.83px;font-size:7.2px;letter-spacing:0.023px;color:#77767c;">D major, baroque, instrume...</div>
<div class="t" style="left:47.00px;top:175.93px;font-size:7.2px;letter-spacing:-0.196px;color:#e4e4e8;">02:11</div>
<div class="a" style="left:4.5px;top:196px;width:151.5px;height:39px;background:#26252b;border-radius:4px"></div>
<div class="a" style="left:7.200000000000003px;top:197.6px;width:35px;height:35.5px;border-radius:2px;overflow:hidden"><svg style="left:0;top:0" width="35" height="35.5" viewBox="0 0 35 35.5"><rect width="35" height="35.5" fill="#101312"/><rect width="18" height="35.5" fill="#46b89a"/><rect x="18" y="0" width="17" height="17" fill="#0c0d0d"/></svg></div>
<div class="t" style="left:47.00px;top:198.03px;font-size:7.4px;letter-spacing:-0.115px;color:#e4e4e8;">Einfach nur Vibes</div>
<div class="t" style="left:47.00px;top:211.83px;font-size:7.2px;letter-spacing:0.086px;color:#77767c;">female vocalist, rock, pop p...</div>
<div class="t" style="left:47.00px;top:223.93px;font-size:7.2px;letter-spacing:-0.196px;color:#e4e4e8;">02:11</div>
<div class="a" style="left:4.5px;top:244px;width:151.5px;height:39px;background:#26252b;border-radius:4px"></div>
<div class="a" style="left:7.200000000000003px;top:245.6px;width:35px;height:35.5px;border-radius:2px;overflow:hidden"><svg style="left:0;top:0" width="35" height="35.5" viewBox="0 0 35 35.5"><rect x="0" y="0.0" width="7.05" height="3.55" fill="#f0c070"/><rect x="7" y="0.0" width="7.05" height="3.55" fill="#e8b050"/><rect x="14" y="0.0" width="7.05" height="3.55" fill="#e0a848"/><rect x="21" y="0.0" width="7.05" height="3.55" fill="#d09040"/><rect x="28" y="0.0" width="7.05" height="3.55" fill="#d89838"/><rect x="0" y="3.5" width="7.05" height="3.55" fill="#2a1e10"/><rect x="7" y="3.5" width="7.05" height="3.55" fill="#f0c070"/><rect x="14" y="3.5" width="7.05" height="3.55" fill="#2a1e10"/><rect x="21" y="3.5" width="7.05" height="3.55" fill="#e0a848"/><rect x="28" y="3.5" width="7.05" height="3.55" fill="#d09040"/><rect x="0" y="7.0" width="7.05" height="3.55" fill="#d09040"/><rect x="7" y="7.0" width="7.05" height="3.55" fill="#d89838"/><rect x="14" y="7.0" width="7.05" height="3.55" fill="#f0c070"/><rect x="21" y="7.0" width="7.05" height="3.55" fill="#2a1e10"/><rect x="28" y="7.0" width="7.05" height="3.55" fill="#e0a848"/><rect x="0" y="10.5" width="7.05" height="3.55" fill="#2a1e10"/><rect x="7" y="10.5" width="7.05" height="3.55" fill="#d09040"/><rect x="14" y="10.5" width="7.05" height="3.55" fill="#d89838"/><rect x="21" y="10.5" width="7.05" height="3.55" fill="#f0c070"/><rect x="28" y="10.5" width="7.05" height="3.55" fill="#e8b050"/><rect x="0" y="14.0" width="7.05" height="3.55" fill="#e8b050"/><rect x="7" y="14.0" width="7.05" height="3.55" fill="#e0a848"/><rect x="14" y="14.0" width="7.05" height="3.55" fill="#d09040"/><rect x="21" y="14.0" width="7.05" height="3.55" fill="#d89838"/><rect x="28" y="14.0" width="7.05" height="3.55" fill="#f0c070"/><rect x="0" y="17.5" width="7.05" height="3.55" fill="#f0c070"/><rect x="7" y="17.5" width="7.05" height="3.55" fill="#e8b050"/><rect x="14" y="17.5" width="7.05" height="3.55" fill="#e0a848"/><rect x="21" y="17.5" width="7.05" height="3.55" fill="#d09040"/><rect x="28" y="17.5" width="7.05" height="3.55" fill="#d89838"/></svg></div>
<div class="t" style="left:47.00px;top:246.03px;font-size:7.4px;letter-spacing:-0.047px;color:#e4e4e8;">Sei Mit Dabei</div>
<div class="t" style="left:47.00px;top:259.83px;font-size:7.2px;letter-spacing:0.086px;color:#77767c;">female vocalist, rock, pop p...</div>
<div class="t" style="left:47.00px;top:271.93px;font-size:7.2px;letter-spacing:-0.196px;color:#e4e4e8;">02:11</div>
</div>
<div class="a" style="left:92px;top:116px;width:154.3px;height:42.5px;background:transparent;border:2px solid #e2564a;border-radius:2px"></div>
<div class="a" style="left:231.4px;top:146.2px;width:8.8px;height:8.8px;background:#c890f4;border-radius:2px"></div>
<svg style="left:231.4px;top:146.2px" width="9" height="9" viewBox="0 0 9 9"><path d="M4.4 2V6.8M2 4.4H6.8" stroke="#fff" stroke-width="1.2"/></svg>
<div class="a" style="left:335px;top:20px;width:258px;height:313px;background:#1c1b21;border-radius:5px;overflow:hidden"></div>
<div class="a" style="left:335px;top:20px;width:258px;height:24.6px;background:#313135;border-radius:5px 5px 0 0"></div>
<div class="a" style="left:336px;top:105.8px;width:256px;height:144.2px;background:#000;"></div>
<div class="t" style="left:343.50px;top:29.03px;font-size:7.2px;letter-spacing:0.013px;color:#e2e2e6;">Spieler</div>
<div class="a" style="left:342px;top:313.3px;width:248px;height:2.3px;background:#28272d;border-radius:1px"></div>
<svg style="left:337px;top:310.5px" width="8" height="8" viewBox="0 0 8 8"><circle cx="3.8" cy="3.7" r="2.3" fill="#0c0c10" stroke="#f0f0f2" stroke-width="1.4"/></svg>
<div class="t" style="left:340.80px;top:322.23px;font-size:7.2px;letter-spacing:-0.190px;color:#f0f0f2;">00:00:00</div>
<div class="t" style="left:369.50px;top:322.23px;font-size:7.2px;letter-spacing:0.001px;color:#9a999f;">/ 02:11:04</div>
<svg style="left:446px;top:322.5px" width="5" height="6" viewBox="0 0 5 6"><path d="M4.6 0.3L1.2 3L4.6 5.7Z" fill="#5a5960"/><path d="M0.6 0.3V5.7" stroke="#5a5960" stroke-width="0.9"/></svg>
<svg style="left:461.6px;top:321.8px" width="6" height="8" viewBox="0 0 6 8"><path d="M0.3 0.3L5.8 3.9L0.3 7.5Z" fill="#f4f4f6"/></svg>
<svg style="left:479px;top:322.5px" width="5" height="6" viewBox="0 0 5 6"><path d="M0.4 0.3L3.8 3L0.4 5.7Z" fill="#c0c0c4"/><path d="M4.4 0.3V5.7" stroke="#c0c0c4" stroke-width="0.9"/></svg>
<div class="t" style="left:519.00px;top:322.13px;font-size:7.2px;letter-spacing:-0.003px;color:#c8c8cc;">16:9</div>
<svg style="left:535px;top:324.5px" width="3" height="2" viewBox="0 0 3 2"><path d="M0 0H3L1.5 1.8Z" fill="#c8c8cc"/></svg>
<svg style="left:546px;top:321.5px" width="9" height="8" viewBox="0 0 9 8"><rect x="0.5" y="1.6" width="8" height="5.8" rx="1" fill="none" stroke="#d0d0d4" stroke-width="0.9"/><circle cx="4.5" cy="4.5" r="1.5" fill="none" stroke="#d0d0d4" stroke-width="0.9"/><path d="M2.8 1.6L3.5 0.5H5.5L6.2 1.6" fill="none" stroke="#d0d0d4" stroke-width="0.8"/></svg>
<svg style="left:563px;top:321.5px" width="8" height="8" viewBox="0 0 8 8"><path d="M2.5 0V8M5.5 0V8M0 2.8H8M0 5.5H8" stroke="#d0d0d4" stroke-width="0.9"/></svg>
<svg style="left:580px;top:321.5px" width="8" height="8" viewBox="0 0 8 8"><path d="M0.5 2.5V0.5H2.5M5.5 0.5H7.5V2.5M7.5 5.5V7.5H5.5M2.5 7.5H0.5V5.5" fill="none" stroke="#d0d0d4" stroke-width="0.9"/></svg>
<div class="a" style="left:596.5px;top:20px;width:200.5px;height:314px;background:#1c1b21;border-radius:5px;overflow:hidden"></div>
<div class="a" style="left:596.5px;top:20px;width:200.5px;height:24.6px;background:#313135;border-radius:5px 5px 0 0"></div>
<div class="a" style="left:602.5px;top:25px;width:31.5px;height:20px;background:#1c1b21;border-radius:5px 5px 0 0"></div>
<div class="a" style="left:596.5px;top:310.5px;width:200.5px;height:23.5px;background:#232228;border-radius:0 0 5px 5px"></div>
<div class="t" style="left:609.25px;top:29.93px;font-size:7.4px;letter-spacing:-0.125px;color:#b06ef0;">Audio</div>
<div class="a" style="left:609px;top:43.4px;width:18.5px;height:1.6px;background:#a070e0;border-radius:1px"></div>
<div class="t" style="left:647.50px;top:29.93px;font-size:7.4px;letter-spacing:-0.092px;color:#c9c8ce;">Geschwindigkeit</div>
<svg style="left:609px;top:56.4px" width="7" height="7" viewBox="0 0 7 7"><path d="M0.5 2.3H2L4.3 0.5V6.5L2 4.7H0.5Z" fill="none" stroke="#a9a8ae" stroke-width="0.8"/><path d="M5.4 2Q6.4 3.5 5.4 5" fill="none" stroke="#a9a8ae" stroke-width="0.7"/></svg>
<div class="t" style="left:618.75px;top:56.28px;font-size:7.2px;letter-spacing:-0.137px;color:#e4e4e8;">Lautstärke</div>
<div class="a" style="left:606.5px;top:71.60000000000001px;width:140.5px;height:1.6px;background:#2c2b31;border-radius:1px"></div>
<div class="a" style="left:606.5px;top:71.0px;width:37.0px;height:2.8px;background:#eeeef0;border-radius:2px"></div>
<div class="a" style="left:640.1px;top:69.0px;width:6.8px;height:6.8px;background:#141318;border:1.3px solid #f4f4f6;border-radius:50%"></div>
<div class="a" style="left:753px;top:65.9px;width:35px;height:13px;background:#25242a;border-radius:2px"></div>
<div class="t" style="left:757.90px;top:68.93px;font-size:7.2px;letter-spacing:-0.004px;color:#c8c8cc;">100%</div>
<svg style="left:780.2px;top:67.9px" width="5" height="9" viewBox="0 0 5 9"><path d="M0.5 2.8L2.2 1L3.9 2.8M0.5 6.2L2.2 8L3.9 6.2" fill="none" stroke="#d0d0d4" stroke-width="0.9"/></svg>
<div class="t" style="left:606.50px;top:88.78px;font-size:7.2px;letter-spacing:0.057px;color:#e4e4e8;">Aufblenden</div>
<div class="a" style="left:606.5px;top:104.0px;width:140.5px;height:1.6px;background:#2c2b31;border-radius:1px"></div>
<div class="a" style="left:606.4px;top:101.39999999999999px;width:6.8px;height:6.8px;background:#141318;border:1.3px solid #f4f4f6;border-radius:50%"></div>
<div class="a" style="left:753px;top:98.3px;width:35px;height:13px;background:#25242a;border-radius:2px"></div>
<div class="t" style="left:762.70px;top:101.23px;font-size:7.4px;letter-spacing:0.385px;color:#c8c8cc;">0</div>
<div class="t" style="left:773.00px;top:101.23px;font-size:7.4px;letter-spacing:-0.500px;color:#c8c8cc;">s</div>
<svg style="left:780.2px;top:100.3px" width="5" height="9" viewBox="0 0 5 9"><path d="M0.5 2.8L2.2 1L3.9 2.8M0.5 6.2L2.2 8L3.9 6.2" fill="none" stroke="#d0d0d4" stroke-width="0.9"/></svg>
<div class="t" style="left:606.50px;top:120.78px;font-size:7.2px;letter-spacing:-0.053px;color:#e4e4e8;">Ausblenden</div>
<div class="a" style="left:606.5px;top:136.39999999999998px;width:140.5px;height:1.6px;background:#2c2b31;border-radius:1px"></div>
<div class="a" style="left:606.4px;top:133.79999999999998px;width:6.8px;height:6.8px;background:#141318;border:1.3px solid #f4f4f6;border-radius:50%"></div>
<div class="a" style="left:753px;top:130.7px;width:35px;height:13px;background:#25242a;border-radius:2px"></div>
<div class="t" style="left:762.70px;top:133.63px;font-size:7.4px;letter-spacing:0.385px;color:#c8c8cc;">0</div>
<div class="t" style="left:773.00px;top:133.63px;font-size:7.4px;letter-spacing:-0.500px;color:#c8c8cc;">s</div>
<svg style="left:780.2px;top:132.7px" width="5" height="9" viewBox="0 0 5 9"><path d="M0.5 2.8L2.2 1L3.9 2.8M0.5 6.2L2.2 8L3.9 6.2" fill="none" stroke="#d0d0d4" stroke-width="0.9"/></svg>
<div class="t" style="left:605.60px;top:154.03px;font-size:7.2px;letter-spacing:-0.112px;color:#e4e4e8;">Rückwärts</div>
<div class="a" style="left:641.3px;top:153.6px;width:13.2px;height:7.8px;background:#34333a;border-radius:4px"></div>
<div class="a" style="left:642.1999999999999px;top:154.6px;width:5.8px;height:5.8px;background:#f4f4f6;border-radius:50%"></div>
<div class="t" style="left:605.60px;top:174.03px;font-size:7.2px;letter-spacing:-0.008px;color:#e4e4e8;">Lärmreduzierung</div>
<div class="a" style="left:662.2px;top:173.5px;width:15.6px;height:8px;background:linear-gradient(90deg,#2f6af8,#a42ee6);border-radius:2px"></div>
<div class="t b" style="left:667.70px;top:174.80px;font-size:5.6px;letter-spacing:-0.300px;color:#ffffff;font-weight:bold;">AI</div>
<div class="a" style="left:680.2px;top:173.6px;width:13.2px;height:7.8px;background:#34333a;border-radius:4px"></div>
<div class="a" style="left:681.1px;top:174.6px;width:5.8px;height:5.8px;background:#f4f4f6;border-radius:50%"></div>
<div class="t" style="left:605.60px;top:193.73px;font-size:7.2px;letter-spacing:0.072px;color:#e4e4e8;">Beat-Marker</div>
<div class="a" style="left:648.3px;top:193.3px;width:15.6px;height:8px;background:linear-gradient(90deg,#2f6af8,#a42ee6);border-radius:2px"></div>
<div class="t b" style="left:653.80px;top:194.60px;font-size:5.6px;letter-spacing:-0.300px;color:#ffffff;font-weight:bold;">AI</div>
<svg style="left:666.8px;top:193px" width="8.5" height="8.5" viewBox="0 0 8.5 8.5"><circle cx="4.2" cy="4.2" r="3.8" fill="none" stroke="#b0b0b4" stroke-width="0.8"/><path d="M4.2 3.4V6.4" stroke="#b0b0b4" stroke-width="0.9"/><circle cx="4.2" cy="2.2" r="0.5" fill="#b0b0b4"/></svg>
<div class="a" style="left:677.3px;top:191px;width:44.7px;height:13px;background:#25242a;border-radius:2px"></div>
<div class="t" style="left:683.00px;top:193.83px;font-size:7.2px;letter-spacing:-0.468px;color:#a9a8ae;">AUS</div>
<svg style="left:711px;top:196px" width="5" height="3" viewBox="0 0 5 3"><path d="M0 0H4.6L2.3 2.6Z" fill="#d0d0d4"/></svg>
<div class="t" style="left:605.60px;top:212.33px;font-size:7.2px;letter-spacing:-0.008px;color:#e4e4e8;">Stimmentferner</div>
<div class="a" style="left:657.3px;top:211.8px;width:15.6px;height:8px;background:linear-gradient(90deg,#2f6af8,#a42ee6);border-radius:2px"></div>
<div class="t b" style="left:662.80px;top:213.10px;font-size:5.6px;letter-spacing:-0.300px;color:#ffffff;font-weight:bold;">AI</div>
<div class="a" style="left:676.2px;top:215.3px;width:2px;height:0.9px;background:#c0c0c4;"></div>
<div class="a" style="left:682px;top:211.9px;width:13.2px;height:7.8px;background:#34333a;border-radius:4px"></div>
<div class="a" style="left:682.9px;top:212.9px;width:5.8px;height:5.8px;background:#f4f4f6;border-radius:50%"></div>
<div class="t" style="left:605.80px;top:228.83px;font-size:7.2px;letter-spacing:-0.057px;color:#e4e4e8;">Stimmeffekte</div>
<div class="a" style="left:605px;top:239px;width:38.2px;height:37.6px;background:#2a292f;border:1.8px solid #e6e6ea;border-radius:3px"></div>
<svg style="left:614.6px;top:248.2px" width="19" height="19" viewBox="0 0 19 19"><circle cx="9.4" cy="9.4" r="8.8" fill="none" stroke="#8a898f" stroke-width="1"/><path d="M3.2 3.2L15.6 15.6" stroke="#8a898f" stroke-width="1"/></svg>
<div class="a" style="left:648.6px;top:239px;width:38.7px;height:37.6px;border-radius:3px;overflow:hidden"><svg style="left:0;top:0" width="38.7" height="37.6" viewBox="0 0 38.7 37.6">
<defs><radialGradient id="hg" cx="0.5" cy="0.4" r="0.75"><stop offset="0" stop-color="#f2f2f2"/><stop offset="0.6" stop-color="#cfcfcf"/><stop offset="1" stop-color="#9a9a9a"/></radialGradient></defs>
<rect width="38.7" height="37.6" fill="url(#hg)"/>
<path d="M1.5 37.6Q2.5 27 10 24.5L15.5 21.5H23.5L29 24.5Q36.5 27 37.5 37.6Z" fill="#3a4230"/>
<path d="M15.5 21.5L19.5 25.5L23.5 21.5Z" fill="#2a3024"/>
<rect x="16.8" y="17" width="5.4" height="5.5" fill="#9a6e58"/>
<ellipse cx="19.5" cy="12" rx="5.4" ry="7.2" fill="#b8866c"/>
<path d="M14.2 10Q14.6 4.6 19.5 4.6Q24.4 4.6 24.8 10Q22.5 7.2 19.5 7.2Q16.5 7.2 14.2 10Z" fill="#d6b4a4"/>
<path d="M14.6 11.6H24.4" stroke="#2a2020" stroke-width="1"/>
</svg></div>
<div class="a" style="left:692.3px;top:239px;width:37.9px;height:37.6px;border-radius:3px;overflow:hidden"><svg style="left:0;top:0" width="37.9" height="37.6" viewBox="0 0 37.9 37.6">
<rect width="37.9" height="37.6" fill="#eee4d4"/>
<path d="M1 37.6Q4 26 11 23L18 21L25 22.5Q32 25 36 37.6Z" fill="#1c1f34"/>
<path d="M5 37.6L12 25L25 32L23 37.6Z" fill="#f2682a"/>
<path d="M14 12Q13 3.5 20 3.5Q27 4 26.5 12Q27 18 24 21L16 20.5Q13.5 17 14 12Z" fill="#d4a664"/>
<ellipse cx="20" cy="13.5" rx="4.6" ry="5.6" fill="#eec4a4"/>
<rect x="18" y="18" width="4" height="4" fill="#e4b898"/>
</svg></div>
<div class="a" style="left:736px;top:239px;width:38px;height:37.6px;border-radius:3px;overflow:hidden"><svg style="left:0;top:0" width="38" height="37.6" viewBox="0 0 38 37.6">
<rect width="38" height="37.6" fill="#f5c2a4"/>
<path d="M8.5 15Q8 3.5 18.5 3.5Q29 3.5 28.5 15Q29.5 22 27 26L10 26Q7.5 22 8.5 15Z" fill="#6e4232"/>
<ellipse cx="18.5" cy="13.5" rx="5.2" ry="6.2" fill="#f2cab4"/>
<path d="M6 37.6Q6.5 26 12 23.5L18.5 22L25 23.5Q30.5 26 31 37.6Z" fill="#f6f2f6"/>
<path d="M8.5 27H20L19 36H9.5Z" fill="#b42636"/>
<ellipse cx="18.5" cy="32" rx="3.5" ry="2.4" fill="#f2cab4"/>
</svg></div>
<div class="t" style="left:617.00px;top:280.63px;font-size:7.4px;letter-spacing:-0.005px;color:#e8e8ec;">Nein</div>
<div class="t" style="left:660.70px;top:280.63px;font-size:7.4px;letter-spacing:-0.072px;color:#a9a8ae;">Herr</div>
<div class="t" style="left:704.70px;top:280.63px;font-size:7.4px;letter-spacing:-0.378px;color:#a9a8ae;">Frau</div>
<div class="t" style="left:747.70px;top:280.63px;font-size:7.4px;letter-spacing:-0.228px;color:#a9a8ae;">Kind</div>
<div class="a" style="left:605.3px;top:316px;width:61.5px;height:12.3px;background:transparent;border:1px solid #9a5ad8;border-radius:2px"></div>
<div class="t" style="left:612.60px;top:318.63px;font-size:7.2px;letter-spacing:0.092px;color:#b070f0;">Auto-Untertitel</div>
<div class="a" style="left:732.7px;top:316px;width:55.3px;height:12.3px;background:#3a393f;border-radius:2px"></div>
<div class="t" style="left:739.20px;top:318.63px;font-size:7.2px;letter-spacing:-0.035px;color:#e4e4e8;">Zurücksetzen</div>
<div class="a" style="left:5px;top:337px;width:792px;height:17.4px;background:#303033;border-radius:5px 5px 0 0"></div>
<div class="a" style="left:5px;top:354.4px;width:792px;height:101.6px;background:#15161d;"></div>
<svg style="left:10.7px;top:341.5px" width="10" height="8" viewBox="0 0 10 8"><path d="M3.2 0.5L0.8 2.8L3.2 5.1" fill="none" stroke="#d4d4d8" stroke-width="1"/><path d="M0.8 2.8H6.2A3 2.4 0 0 1 6.2 7.6H2.5" fill="none" stroke="#d4d4d8" stroke-width="1"/></svg>
<svg style="left:32px;top:341.5px" width="10" height="8" viewBox="0 0 10 8"><path d="M6.8 0.5L9.2 2.8L6.8 5.1" fill="none" stroke="#55545a" stroke-width="1"/><path d="M9.2 2.8H3.8A3 2.4 0 0 0 3.8 7.6H7.5" fill="none" stroke="#55545a" stroke-width="1"/></svg>
<svg style="left:52.7px;top:341px" width="9.5" height="9.5" viewBox="0 0 9.5 9.5"><path d="M0.5 1.6H9M3.2 1.6V0.5H6.3V1.6M1.5 1.6L2 8.8H7.5L8 1.6" fill="none" stroke="#d4d4d8" stroke-width="1"/><path d="M3.9 3.6V6.8M5.6 3.6V6.8" stroke="#d4d4d8" stroke-width="0.9"/></svg>
<div class="a" style="left:73px;top:341px;width:0.8px;height:10px;background:#3e3d44;"></div>
<svg style="left:83.3px;top:341px" width="9.5" height="9" viewBox="0 0 9.5 9"><path d="M1 0.5L6.5 6.3M8.5 0.5L3 6.3" stroke="#d4d4d8" stroke-width="1"/><circle cx="2.2" cy="7.2" r="1.5" fill="none" stroke="#d4d4d8" stroke-width="0.9"/><circle cx="7.3" cy="7.2" r="1.5" fill="none" stroke="#d4d4d8" stroke-width="0.9"/></svg>
<div class="t" style="left:96.75px;top:342.43px;font-size:7.4px;letter-spacing:-0.006px;color:#d4d4d8;">Teilen</div>
<svg style="left:140.2px;top:341.2px" width="7.5" height="8.5" viewBox="0 0 7.5 8.5"><path d="M0.5 0.5H7V5.8L3.75 8L0.5 5.8Z" fill="none" stroke="#d4d4d8" stroke-width="0.9"/><rect x="2" y="2" width="3.5" height="2.2" fill="#d4d4d8"/></svg>
<svg style="left:159.7px;top:341px" width="10.5" height="9.5" viewBox="0 0 10.5 9.5"><rect x="0.5" y="0.5" width="9.5" height="8.5" rx="2.5" fill="none" stroke="#d4d4d8" stroke-width="0.9"/><path d="M3 3H7.5M5.25 3V6.8" stroke="#d4d4d8" stroke-width="1.2"/></svg>
<svg style="left:173.2px;top:344.3px" width="3" height="2" viewBox="0 0 3 2"><path d="M0 0H3L1.5 1.8Z" fill="#d4d4d8"/></svg>
<svg style="left:186.7px;top:341px" width="10" height="9" viewBox="0 0 10 9"><path d="M0.5 0.8H9.5M0.5 4.5H3M0.5 8H3" stroke="#d4d4d8" stroke-width="0.8"/><path d="M4 3L9 7.8M9 3L4 7.8" stroke="#d4d4d8" stroke-width="0.9"/><circle cx="4.8" cy="7.5" r="1" fill="none" stroke="#d4d4d8" stroke-width="0.7"/><circle cx="8.2" cy="7.5" r="1" fill="none" stroke="#d4d4d8" stroke-width="0.7"/></svg>
<svg style="left:207.7px;top:341px" width="10.5" height="9" viewBox="0 0 10.5 9"><path d="M1.5 8.2A4.6 4.6 0 1 1 9 8.2" fill="none" stroke="#d4d4d8" stroke-width="1"/><path d="M5.25 5.5L7.2 3" stroke="#d4d4d8" stroke-width="1"/></svg>
<svg style="left:228.2px;top:341px" width="11" height="9.5" viewBox="0 0 11 9.5"><path d="M2 2.4A4.3 4.3 0 1 1 1.4 6.2" fill="none" stroke="#d4d4d8" stroke-width="1"/><path d="M0.6 0.8L1.8 2.8L3.8 1.6" fill="none" stroke="#d4d4d8" stroke-width="0.8"/><path d="M4.8 3.2L7.4 4.8L4.8 6.4Z" fill="none" stroke="#d4d4d8" stroke-width="0.8"/></svg>
<div class="a" style="left:249.7px;top:341px;width:0.8px;height:10px;background:#3e3d44;"></div>
<svg style="left:260px;top:341.5px" width="9.5" height="9" viewBox="0 0 9.5 9"><path d="M3 1.5H8.5V8.5H1V3" fill="none" stroke="#d4d4d8" stroke-width="0.9"/><path d="M1.5 0V3M0 1.5H3" stroke="#d4d4d8" stroke-width="0.7"/><path d="M3.3 4H6.7M5 4V7" stroke="#d4d4d8" stroke-width="1"/></svg>
<svg style="left:282px;top:341.2px" width="8.5" height="9" viewBox="0 0 8.5 9"><path d="M0.5 0.8H8V5.8L4.25 8.5L0.5 5.8Z" fill="none" stroke="#d4d4d8" stroke-width="0.9"/><circle cx="4.25" cy="3.8" r="1.2" fill="#d4d4d8"/></svg>
<svg style="left:302px;top:341px" width="11.5" height="9.5" viewBox="0 0 11.5 9.5"><path d="M1.5 3.5V8.2H9.5M9.5 3.5H1.5L3.5 1H7.5L9.5 3.5V6" fill="none" stroke="#d4d4d8" stroke-width="0.9"/><path d="M5.5 7V4.5M4.3 5.6L5.5 4.4L6.7 5.6" fill="none" stroke="#d4d4d8" stroke-width="0.8"/><path d="M9 7.4L10.5 8.2L9 9" fill="none" stroke="#d4d4d8" stroke-width="0.7"/></svg>
<svg style="left:579.7px;top:341px" width="8.5" height="9.5" viewBox="0 0 8.5 9.5"><rect x="2.6" y="0.5" width="3.3" height="5.5" rx="1.65" fill="none" stroke="#d4d4d8" stroke-width="0.9"/><path d="M0.6 4Q0.6 7.2 4.25 7.2Q7.9 7.2 7.9 4M4.25 7.2V9.2" fill="none" stroke="#d4d4d8" stroke-width="0.9"/></svg>
<div class="a" style="left:601.3px;top:341px;width:0.8px;height:10px;background:#3e3d44;"></div>
<svg style="left:615px;top:344px" width="9" height="4.5" viewBox="0 0 9 4.5"><rect x="0.5" y="0.5" width="3.5" height="3.5" rx="1" fill="none" stroke="#d4d4d8" stroke-width="1"/><rect x="5" y="0.5" width="3.5" height="3.5" rx="1" fill="none" stroke="#d4d4d8" stroke-width="1"/><path d="M3 2.25H6" stroke="#d4d4d8" stroke-width="1"/></svg>
<div class="a" style="left:636.7px;top:340.7px;width:12px;height:11.3px;background:#1c1b21;border-radius:2px"></div>
<svg style="left:637.5px;top:342px" width="10.5" height="9" viewBox="0 0 10.5 9"><rect x="0.5" y="2.2" width="4.2" height="4.4" rx="0.8" fill="#b070f0"/><rect x="5.8" y="2.2" width="4.2" height="4.4" rx="0.8" fill="#b070f0"/><path d="M5.25 0V1.5M5.25 7.3V9M3.5 0.5H7" stroke="#b070f0" stroke-width="0.7"/></svg>
<svg style="left:660.7px;top:342px" width="10" height="7" viewBox="0 0 10 7"><rect x="0.5" y="1.5" width="9" height="4" rx="2" fill="none" stroke="#d4d4d8" stroke-width="0.9"/><path d="M5 0V7" stroke="#d4d4d8" stroke-width="0.9"/></svg>
<svg style="left:684.5px;top:341.5px" width="10.5" height="8.5" viewBox="0 0 10.5 8.5"><rect x="0.5" y="0.5" width="9.5" height="7.5" rx="2.5" fill="none" stroke="#d4d4d8" stroke-width="0.9"/><path d="M2.5 4.25H8M3.8 2.9L2.4 4.25L3.8 5.6M6.7 2.9L8.1 4.25L6.7 5.6" fill="none" stroke="#d4d4d8" stroke-width="0.8"/></svg>
<svg style="left:708.5px;top:341.5px" width="9" height="9" viewBox="0 0 9 9"><circle cx="4.5" cy="4.5" r="4.1" fill="none" stroke="#d4d4d8" stroke-width="0.9"/><path d="M2.6 4.5H6.4" stroke="#d4d4d8" stroke-width="0.9"/></svg>
<div class="a" style="left:727px;top:345.4px;width:50.5px;height:1.4px;background:#3c3b42;border-radius:1px"></div>
<div class="a" style="left:722px;top:342.7px;width:6.7px;height:6.7px;background:#0e0e12;border:1.4px solid #f0f0f2;border-radius:50%"></div>
<svg style="left:782px;top:341.5px" width="9" height="9" viewBox="0 0 9 9"><circle cx="4.5" cy="4.5" r="4.1" fill="none" stroke="#d4d4d8" stroke-width="0.9"/><path d="M2.6 4.5H6.4M4.5 2.6V6.4" stroke="#d4d4d8" stroke-width="0.9"/></svg>
<div class="a" style="left:5px;top:354px;width:792px;height:1px;background:#0e0e12;"></div>
<div class="a" style="left:90.5px;top:369.2px;width:706.5px;height:7.3px;background:#101015;"></div>
<div class="a" style="left:59.5px;top:355px;width:0.8px;height:101px;background:#101014;"></div>
<svg style="left:0;top:0" width="800" height="461" viewBox="0 0 800 461"><rect x="103.6" y="366" width="0.9" height="3.7" fill="#48484f"/><rect x="117.7" y="366" width="0.9" height="3.7" fill="#48484f"/><rect x="131.8" y="366" width="0.9" height="3.7" fill="#48484f"/><rect x="145.9" y="366" width="0.9" height="3.7" fill="#48484f"/><rect x="160.0" y="363.5" width="1" height="6.2" fill="#5a5a62"/><rect x="174.1" y="366" width="0.9" height="3.7" fill="#48484f"/><rect x="188.2" y="366" width="0.9" height="3.7" fill="#48484f"/><rect x="202.3" y="366" width="0.9" height="3.7" fill="#48484f"/><rect x="216.4" y="366" width="0.9" height="3.7" fill="#48484f"/><rect x="230.5" y="363.5" width="1" height="6.2" fill="#5a5a62"/><rect x="244.6" y="366" width="0.9" height="3.7" fill="#48484f"/><rect x="258.7" y="366" width="0.9" height="3.7" fill="#48484f"/><rect x="272.8" y="366" width="0.9" height="3.7" fill="#48484f"/><rect x="286.9" y="366" width="0.9" height="3.7" fill="#48484f"/><rect x="301.0" y="363.5" width="1" height="6.2" fill="#5a5a62"/><rect x="315.1" y="366" width="0.9" height="3.7" fill="#48484f"/><rect x="329.2" y="366" width="0.9" height="3.7" fill="#48484f"/><rect x="343.3" y="366" width="0.9" height="3.7" fill="#48484f"/><rect x="357.4" y="366" width="0.9" height="3.7" fill="#48484f"/><rect x="371.5" y="363.5" width="1" height="6.2" fill="#5a5a62"/><rect x="385.6" y="366" width="0.9" height="3.7" fill="#48484f"/><rect x="399.7" y="366" width="0.9" height="3.7" fill="#48484f"/><rect x="413.8" y="366" width="0.9" height="3.7" fill="#48484f"/><rect x="427.9" y="366" width="0.9" height="3.7" fill="#48484f"/><rect x="442.0" y="363.5" width="1" height="6.2" fill="#5a5a62"/><rect x="456.1" y="366" width="0.9" height="3.7" fill="#48484f"/><rect x="470.2" y="366" width="0.9" height="3.7" fill="#48484f"/><rect x="484.3" y="366" width="0.9" height="3.7" fill="#48484f"/><rect x="498.4" y="366" width="0.9" height="3.7" fill="#48484f"/><rect x="512.5" y="363.5" width="1" height="6.2" fill="#5a5a62"/><rect x="526.6" y="366" width="0.9" height="3.7" fill="#48484f"/><rect x="540.7" y="366" width="0.9" height="3.7" fill="#48484f"/><rect x="554.8" y="366" width="0.9" height="3.7" fill="#48484f"/><rect x="568.9" y="366" width="0.9" height="3.7" fill="#48484f"/><rect x="583.0" y="363.5" width="1" height="6.2" fill="#5a5a62"/><rect x="597.1" y="366" width="0.9" height="3.7" fill="#48484f"/><rect x="611.2" y="366" width="0.9" height="3.7" fill="#48484f"/><rect x="625.3" y="366" width="0.9" height="3.7" fill="#48484f"/><rect x="639.4" y="366" width="0.9" height="3.7" fill="#48484f"/><rect x="653.5" y="363.5" width="1" height="6.2" fill="#5a5a62"/><rect x="667.6" y="366" width="0.9" height="3.7" fill="#48484f"/><rect x="681.7" y="366" width="0.9" height="3.7" fill="#48484f"/><rect x="695.8" y="366" width="0.9" height="3.7" fill="#48484f"/><rect x="709.9" y="366" width="0.9" height="3.7" fill="#48484f"/><rect x="724.0" y="363.5" width="1" height="6.2" fill="#5a5a62"/><rect x="738.1" y="366" width="0.9" height="3.7" fill="#48484f"/><rect x="752.2" y="366" width="0.9" height="3.7" fill="#48484f"/><rect x="766.3" y="366" width="0.9" height="3.7" fill="#48484f"/><rect x="780.4" y="366" width="0.9" height="3.7" fill="#48484f"/></svg>
<div class="t" style="left:153.80px;top:357.13px;font-size:7px;letter-spacing:-0.106px;color:#5e5e66;">0:25</div>
<div class="t" style="left:224.30px;top:357.13px;font-size:7px;letter-spacing:-0.106px;color:#5e5e66;">0:50</div>
<div class="t" style="left:294.80px;top:357.13px;font-size:7px;letter-spacing:-0.106px;color:#5e5e66;">1:15</div>
<div class="t" style="left:365.30px;top:357.13px;font-size:7px;letter-spacing:-0.106px;color:#5e5e66;">1:40</div>
<div class="t" style="left:435.80px;top:357.13px;font-size:7px;letter-spacing:-0.106px;color:#5e5e66;">2:05</div>
<div class="t" style="left:506.30px;top:357.13px;font-size:7px;letter-spacing:-0.106px;color:#5e5e66;">2:30</div>
<div class="t" style="left:576.80px;top:357.13px;font-size:7px;letter-spacing:-0.106px;color:#5e5e66;">2:55</div>
<div class="t" style="left:647.30px;top:357.13px;font-size:7px;letter-spacing:-0.106px;color:#5e5e66;">3:20</div>
<div class="t" style="left:717.80px;top:357.13px;font-size:7px;letter-spacing:-0.106px;color:#5e5e66;">3:45</div>
<div class="t" style="left:788.30px;top:357.13px;font-size:7px;letter-spacing:-0.106px;color:#5e5e66;">4:10</div>
<div class="a" style="left:797px;top:354px;width:3px;height:107px;background:#0e0d12;"></div>
<div class="a" style="left:7px;top:377px;width:50.7px;height:33.4px;background:#222227;border-radius:2px"></div>
<div class="a" style="left:90.5px;top:376.7px;width:703px;height:34.3px;background:#242428;"></div>
<svg style="left:14.75px;top:390.5px" width="7" height="6.5" viewBox="0 0 7 6.5"><rect x="0.4" y="0.4" width="6.2" height="5.7" rx="0.8" fill="#8c8c92"/><path d="M2 0.4V6.1M5 0.4V6.1M2 3.25H5" stroke="#222227" stroke-width="0.8"/></svg>
<svg style="left:29.7px;top:390.5px" width="6" height="6" viewBox="0 0 6 6"><circle cx="3" cy="3" r="2.6" fill="none" stroke="#8c8c92" stroke-width="0.9"/><path d="M1.2 1.2L4.8 4.8M4.8 1.2L1.2 4.8" stroke="#8c8c92" stroke-width="0.7"/></svg>
<svg style="left:43.4px;top:390.5px" width="7" height="6.5" viewBox="0 0 7 6.5"><path d="M0.5 2H1.8L3.6 0.5V6L1.8 4.5H0.5Z" fill="none" stroke="#8c8c92" stroke-width="0.8"/><path d="M4.8 1.2Q6.4 3.25 4.8 5.3" fill="none" stroke="#8c8c92" stroke-width="0.8"/></svg>
<svg style="left:15.4px;top:420.5px" width="6" height="7.5" viewBox="0 0 6 7.5"><path d="M1 0.5V3M0 1.5H2" stroke="#8c8c92" stroke-width="0.7"/><path d="M3.5 6.2V1L5.5 2" fill="none" stroke="#8c8c92" stroke-width="0.9"/><circle cx="2.6" cy="6.2" r="1.1" fill="#8c8c92"/></svg>
<svg style="left:29px;top:421px" width="7" height="6.5" viewBox="0 0 7 6.5"><path d="M0.5 2H1.8L3.6 0.5V6L1.8 4.5H0.5Z" fill="none" stroke="#8c8c92" stroke-width="0.8"/><path d="M4.8 1.2Q6.4 3.25 4.8 5.3" fill="none" stroke="#8c8c92" stroke-width="0.8"/></svg>
<div class="a" style="left:63.5px;top:383px;width:22.5px;height:22.3px;background:#1d1d22;border:0.8px solid #28282e;border-radius:4px"></div>
<div class="t b" style="left:66.00px;top:391.01px;font-size:6.2px;letter-spacing:-0.115px;color:#e8e8ec;font-weight:bold;">Cover</div>
<div class="a" style="left:90px;top:412.8px;width:370px;height:24.2px;border:1px solid #f2f0f8;border-radius:3px;background:#ad9cd3;overflow:hidden">
<svg style="left:3px;top:0.5px" width="366" height="22" viewBox="0 0 366 22"><path d="M0 0 L0.0 6.6 L1.5 7.8 L2.8 7.4 L4.7 5.7 L6.8 5.6 L8.8 5.7 L10.1 7.0 L12.8 5.9 L14.4 7.7 L17.3 7.5 L19.2 8.9 L20.5 8.5 L22.2 6.0 L23.6 6.6 L26.3 6.1 L28.6 7.7 L30.4 7.4 L31.7 5.7 L33.3 7.9 L35.3 6.6 L37.5 7.1 L39.3 8.3 L41.7 6.4 L44.0 7.3 L46.7 8.1 L48.5 8.9 L49.9 7.0 L52.4 6.0 L54.5 5.6 L56.9 8.2 L59.2 8.6 L60.9 7.9 L63.2 7.5 L65.2 8.4 L68.1 7.2 L70.5 5.7 L73.0 7.8 L76.0 8.4 L77.7 6.9 L80.1 5.6 L82.1 6.1 L83.5 5.7 L86.1 6.0 L87.7 6.9 L90.5 5.8 L92.5 7.4 L95.3 8.4 L98.1 6.5 L100.0 6.8 L102.8 8.9 L104.3 6.1 L105.9 6.3 L108.0 7.6 L109.6 5.5 L111.6 6.8 L113.8 8.8 L116.3 7.3 L118.6 7.9 L119.9 8.6 L122.5 8.6 L125.1 6.9 L127.0 5.9 L129.4 5.7 L130.7 6.2 L132.2 6.7 L133.5 5.5 L134.9 5.9 L136.8 5.6 L139.6 7.6 L141.0 6.4 L142.9 6.8 L144.3 8.5 L147.3 7.1 L149.3 5.8 L150.7 6.7 L152.4 8.4 L153.9 5.6 L156.8 7.3 L158.3 7.4 L159.5 7.3 L162.5 8.5 L164.9 6.4 L166.8 6.1 L169.4 7.4 L172.0 6.7 L173.6 8.3 L176.6 8.5 L179.2 8.4 L181.7 6.3 L183.9 6.7 L185.1 5.6 L186.8 6.4 L189.3 8.8 L191.3 8.8 L194.3 8.8 L196.1 6.3 L197.7 6.2 L199.3 7.7 L202.1 8.4 L204.2 7.8 L206.8 5.8 L209.2 8.7 L211.8 8.1 L213.9 6.1 L216.5 6.7 L219.1 8.9 L221.0 6.9 L224.0 8.0 L225.5 5.9 L226.9 8.7 L229.6 6.0 L232.3 8.9 L234.7 6.7 L236.8 6.0 L238.1 8.9 L240.4 7.3 L243.3 7.0 L246.1 8.4 L247.7 6.4 L249.4 6.3 L251.6 6.4 L253.6 6.0 L256.4 6.7 L258.5 7.5 L261.3 7.0 L264.1 7.3 L266.3 7.3 L267.5 7.0 L269.1 5.5 L271.7 6.1 L273.8 8.0 L276.0 6.6 L278.1 7.4 L280.7 5.9 L282.9 6.4 L284.6 8.2 L286.7 7.5 L289.3 8.7 L291.3 7.6 L293.4 7.3 L295.8 7.1 L298.0 7.2 L300.9 7.9 L303.7 8.8 L305.3 7.5 L308.2 8.4 L309.7 5.9 L311.7 5.8 L313.3 5.8 L315.7 8.2 L318.5 6.0 L321.0 7.8 L322.5 8.6 L325.4 6.3 L328.3 6.9 L330.4 9.0 L333.1 6.1 L335.1 7.3 L336.9 6.2 L338.7 8.0 L339.9 7.4 L341.9 5.6 L343.7 7.7 L345.8 5.7 L348.8 8.3 L351.7 5.9 L353.4 5.6 L356.0 6.4 L357.5 7.0 L360.3 8.4 L362.0 6.0 L364.8 7.5 L366 6 L366 0 Z" fill="#5b3d9e"/><rect x="1.0" y="0" width="1.4" height="9.2" fill="#5b3d9e"/><rect x="13.9" y="0" width="1.2" height="11.2" fill="#5b3d9e"/><rect x="16.1" y="0" width="1.0" height="12.6" fill="#5b3d9e"/><rect x="18.5" y="0" width="1.2" height="10.2" fill="#5b3d9e"/><rect x="21.8" y="0" width="0.9" height="13.0" fill="#5b3d9e"/><rect x="25.8" y="0" width="2.0" height="9.8" fill="#5b3d9e"/><rect x="31.0" y="0" width="1.5" height="12.3" fill="#5b3d9e"/><rect x="41.7" y="0" width="1.0" height="10.6" fill="#5b3d9e"/><rect x="43.8" y="0" width="1.0" height="12.7" fill="#5b3d9e"/><rect x="52.0" y="0" width="1.1" height="13.8" fill="#5b3d9e"/><rect x="55.1" y="0" width="1.6" height="12.8" fill="#5b3d9e"/><rect x="60.4" y="0" width="1.5" height="9.0" fill="#5b3d9e"/><rect x="63.7" y="0" width="1.0" height="13.1" fill="#5b3d9e"/><rect x="66.7" y="0" width="1.2" height="9.1" fill="#5b3d9e"/><rect x="70.2" y="0" width="1.8" height="12.0" fill="#5b3d9e"/><rect x="74.7" y="0" width="1.1" height="10.3" fill="#5b3d9e"/><rect x="78.7" y="0" width="2.0" height="9.2" fill="#5b3d9e"/><rect x="86.6" y="0" width="1.9" height="11.1" fill="#5b3d9e"/><rect x="98.2" y="0" width="1.3" height="12.5" fill="#5b3d9e"/><rect x="103.8" y="0" width="1.5" height="11.5" fill="#5b3d9e"/><rect x="109.6" y="0" width="1.0" height="11.1" fill="#5b3d9e"/><rect x="113.6" y="0" width="1.1" height="14.9" fill="#5b3d9e"/><rect x="120.9" y="0" width="1.8" height="10.9" fill="#5b3d9e"/><rect x="124.6" y="0" width="1.8" height="13.0" fill="#5b3d9e"/><rect x="127.3" y="0" width="1.7" height="13.1" fill="#5b3d9e"/><rect x="131.2" y="0" width="1.5" height="10.2" fill="#5b3d9e"/><rect x="134.4" y="0" width="2.0" height="15.9" fill="#5b3d9e"/><rect x="136.2" y="0" width="1.4" height="12.3" fill="#5b3d9e"/><rect x="138.8" y="0" width="1.1" height="14.3" fill="#5b3d9e"/><rect x="151.6" y="0" width="0.9" height="12.6" fill="#5b3d9e"/><rect x="153.5" y="0" width="1.1" height="10.8" fill="#5b3d9e"/><rect x="156.3" y="0" width="1.9" height="15.0" fill="#5b3d9e"/><rect x="165.1" y="0" width="1.6" height="10.6" fill="#5b3d9e"/><rect x="167.9" y="0" width="1.9" height="12.4" fill="#5b3d9e"/><rect x="173.1" y="0" width="2.0" height="13.5" fill="#5b3d9e"/><rect x="185.9" y="0" width="1.4" height="14.9" fill="#5b3d9e"/><rect x="190.0" y="0" width="1.1" height="15.7" fill="#5b3d9e"/><rect x="193.2" y="0" width="2.1" height="10.2" fill="#5b3d9e"/><rect x="195.8" y="0" width="1.4" height="10.2" fill="#5b3d9e"/><rect x="198.1" y="0" width="1.5" height="9.8" fill="#5b3d9e"/><rect x="205.3" y="0" width="1.3" height="12.4" fill="#5b3d9e"/><rect x="207.4" y="0" width="2.0" height="10.0" fill="#5b3d9e"/><rect x="211.4" y="0" width="1.4" height="10.7" fill="#5b3d9e"/><rect x="214.3" y="0" width="1.1" height="10.1" fill="#5b3d9e"/><rect x="217.6" y="0" width="1.2" height="13.1" fill="#5b3d9e"/><rect x="220.6" y="0" width="1.9" height="12.8" fill="#5b3d9e"/><rect x="222.4" y="0" width="1.5" height="11.8" fill="#5b3d9e"/><rect x="226.0" y="0" width="1.9" height="10.6" fill="#5b3d9e"/><rect x="232.9" y="0" width="1.7" height="9.6" fill="#5b3d9e"/><rect x="244.4" y="0" width="1.2" height="9.2" fill="#5b3d9e"/><rect x="249.0" y="0" width="1.7" height="13.0" fill="#5b3d9e"/><rect x="252.9" y="0" width="1.6" height="9.3" fill="#5b3d9e"/><rect x="255.9" y="0" width="1.5" height="13.2" fill="#5b3d9e"/><rect x="260.5" y="0" width="1.2" height="12.5" fill="#5b3d9e"/><rect x="267.0" y="0" width="1.7" height="9.1" fill="#5b3d9e"/><rect x="270.1" y="0" width="1.2" height="11.7" fill="#5b3d9e"/><rect x="272.0" y="0" width="1.1" height="10.7" fill="#5b3d9e"/><rect x="279.5" y="0" width="1.9" height="12.9" fill="#5b3d9e"/><rect x="282.0" y="0" width="1.5" height="15.8" fill="#5b3d9e"/><rect x="284.3" y="0" width="2.0" height="10.7" fill="#5b3d9e"/><rect x="286.6" y="0" width="1.1" height="9.9" fill="#5b3d9e"/><rect x="288.5" y="0" width="2.0" height="10.6" fill="#5b3d9e"/><rect x="297.1" y="0" width="1.8" height="9.7" fill="#5b3d9e"/><rect x="299.0" y="0" width="1.3" height="10.5" fill="#5b3d9e"/><rect x="301.3" y="0" width="2.0" height="10.1" fill="#5b3d9e"/><rect x="305.9" y="0" width="1.4" height="12.3" fill="#5b3d9e"/><rect x="307.8" y="0" width="1.1" height="10.5" fill="#5b3d9e"/><rect x="312.6" y="0" width="0.9" height="12.2" fill="#5b3d9e"/><rect x="314.5" y="0" width="2.0" height="15.0" fill="#5b3d9e"/><rect x="317.4" y="0" width="1.2" height="12.8" fill="#5b3d9e"/><rect x="321.3" y="0" width="2.0" height="15.0" fill="#5b3d9e"/><rect x="326.9" y="0" width="2.0" height="10.9" fill="#5b3d9e"/><rect x="329.8" y="0" width="2.0" height="10.7" fill="#5b3d9e"/><rect x="340.3" y="0" width="1.3" height="10.3" fill="#5b3d9e"/><rect x="344.5" y="0" width="1.2" height="9.8" fill="#5b3d9e"/><rect x="346.5" y="0" width="2.1" height="11.2" fill="#5b3d9e"/><rect x="353.5" y="0" width="1.8" height="9.4" fill="#5b3d9e"/><rect x="356.6" y="0" width="1.7" height="10.7" fill="#5b3d9e"/></svg>
<div class="a" style="left:0;top:0;width:3.5px;height:22px;background:#3a2e5a"></div>
<div class="a" style="left:0.8px;top:8.5px;width:1.3px;height:6px;background:#e8e4f4;border-radius:1px"></div>
<div class="a" style="left:364.5px;top:0;width:4px;height:22px;background:#4a3c72"></div>
<div class="a" style="left:365.8px;top:8px;width:1.6px;height:6.5px;background:#e8e4f4;border-radius:1px"></div>
</div>
<svg style="left:97.5px;top:415px" width="5" height="6" viewBox="0 0 5 6"><path d="M2.5 5V0.5L4.6 1.4" fill="none" stroke="#e8e4f4" stroke-width="0.8"/><circle cx="1.6" cy="4.9" r="1.1" fill="#e8e4f4"/></svg>
<div class="t" style="left:104.00px;top:414.93px;font-size:7.2px;letter-spacing:0.121px;color:#f4f2fa;">2:11 Heut' hörst du die Gespenster</div>
<div class="a" style="left:89.1px;top:355px;width:1.4px;height:101px;background:#f4f4f6;"></div>
<div class="a" style="left:89.1px;top:355.5px;width:3.6px;height:6.6px;background:#f4f4f6;border-radius:0 2px 2px 0"></div>
<div class="a" style="left:89.1px;top:370.9px;width:7.6px;height:18.2px;background:#f4f4f6;border-radius:0 7.6px 7.6px 0 / 0 9.1px 9.1px 0"></div>
<svg style="left:89.5px;top:374px" width="6" height="12" viewBox="0 0 6 12"><path d="M5 1.5L1 7" stroke="#2a2a30" stroke-width="0.8"/><circle cx="3.6" cy="9.3" r="1.5" fill="none" stroke="#2a2a30" stroke-width="0.8"/><circle cx="1.4" cy="3" r="0.8" fill="#2a2a30"/></svg>
<svg style="left:96.9px;top:377.4px" width="3.2" height="4.8" viewBox="0 0 3.2 4.8"><path d="M0 0L3 2.4L0 4.8Z" fill="#f4f4f6"/></svg>
<div class="a" style="left:793.6px;top:377px;width:3.4px;height:79px;background:#2c2c32;border-radius:1px"></div>
<div class="a" style="left:0px;top:456px;width:800px;height:5px;background:#0e0e12;"></div>
<div class="a" style="left:0px;top:460px;width:800px;height:1px;background:#26262b;"></div>
<svg style="left:0px;top:0px" width="800" height="461" viewBox="0 0 800 461"><path d="M233 154L104.5 397" stroke="#e5524a" stroke-width="3" stroke-linecap="round"/><path d="M100.3 405.5L100.2 394.2L109.2 400.2Z" fill="#e5524a" stroke="#e5524a" stroke-width="0.8" stroke-linejoin="round"/></svg>
</body></html>
